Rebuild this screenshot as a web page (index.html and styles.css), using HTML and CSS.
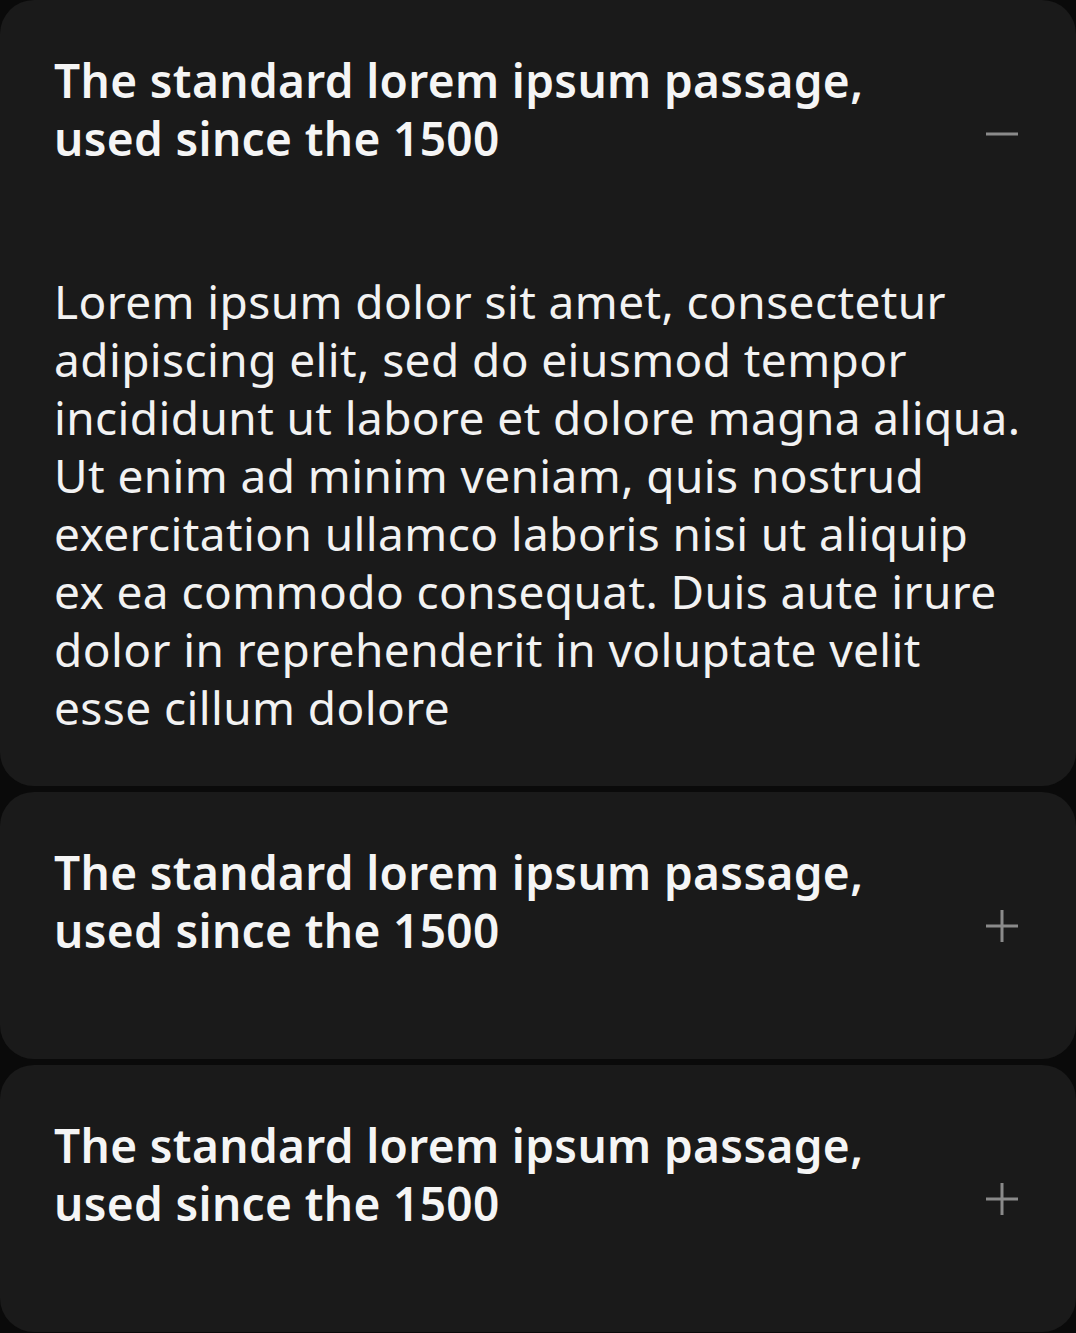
FILE: index.html
```html
<!DOCTYPE html>
<html lang="en">
<head>
<meta charset="utf-8">
<title>Accordion</title>
<link rel="stylesheet" href="styles.css">
</head>
<body>
<div class="accordion">
  <section class="item open">
    <div class="header">
      <h2 class="title">The standard lorem ipsum passage, used since the 1500</h2>
      <svg class="icon" width="32" height="32" viewBox="0 0 32 32" aria-hidden="true"><path d="M0 16H32" /></svg>
    </div>
    <p class="content">Lorem ipsum dolor sit amet, consectetur adipiscing elit, sed do eiusmod tempor incididunt ut labore et dolore magna aliqua. Ut enim ad minim veniam, quis nostrud exercitation ullamco laboris nisi ut aliquip ex ea commodo consequat. Duis aute irure dolor in reprehenderit in voluptate velit esse cillum dolore</p>
  </section>
  <section class="item">
    <div class="header">
      <h2 class="title">The standard lorem ipsum passage, used since the 1500</h2>
      <svg class="icon" width="32" height="32" viewBox="0 0 32 32" aria-hidden="true"><path d="M0 16H32M16 0V32" /></svg>
    </div>
  </section>
  <section class="item">
    <div class="header">
      <h2 class="title">The standard lorem ipsum passage, used since the 1500</h2>
      <svg class="icon" width="32" height="32" viewBox="0 0 32 32" aria-hidden="true"><path d="M0 16H32M16 0V32" /></svg>
    </div>
  </section>
</div>
</body>
</html>
```

FILE: styles.css
```css
html, body {
  margin: 0;
  padding: 0;
  background: #0a0a0a;
}

body {
  font-family: "Noto Sans", "Open Sans", sans-serif;
  color: #f5f5f5;
}

.accordion {
  display: flex;
  flex-direction: column;
  gap: 6px;
}

.item {
  background: #1a1a1a;
  border-radius: 34px;
}

.header {
  box-sizing: border-box;
  height: 267px;
  padding: 0 58px 0 54px;
  display: flex;
  align-items: center;
  gap: 48px;
}

.title {
  flex: 1;
  margin: 0 0 49px;
  font-size: 46px;
  line-height: 58px;
  letter-spacing: 0.36px;
  font-weight: 600;
  color: #f5f5f5;
}

.icon {
  flex: none;
  stroke: #8a8a8a;
  stroke-width: 3;
  fill: none;
}

.content {
  margin: 0;
  padding: 5px 54px 50px;
  font-size: 46px;
  line-height: 58px;
  letter-spacing: 0.4px;
  font-weight: 400;
  color: #f2f2f2;
}
```
